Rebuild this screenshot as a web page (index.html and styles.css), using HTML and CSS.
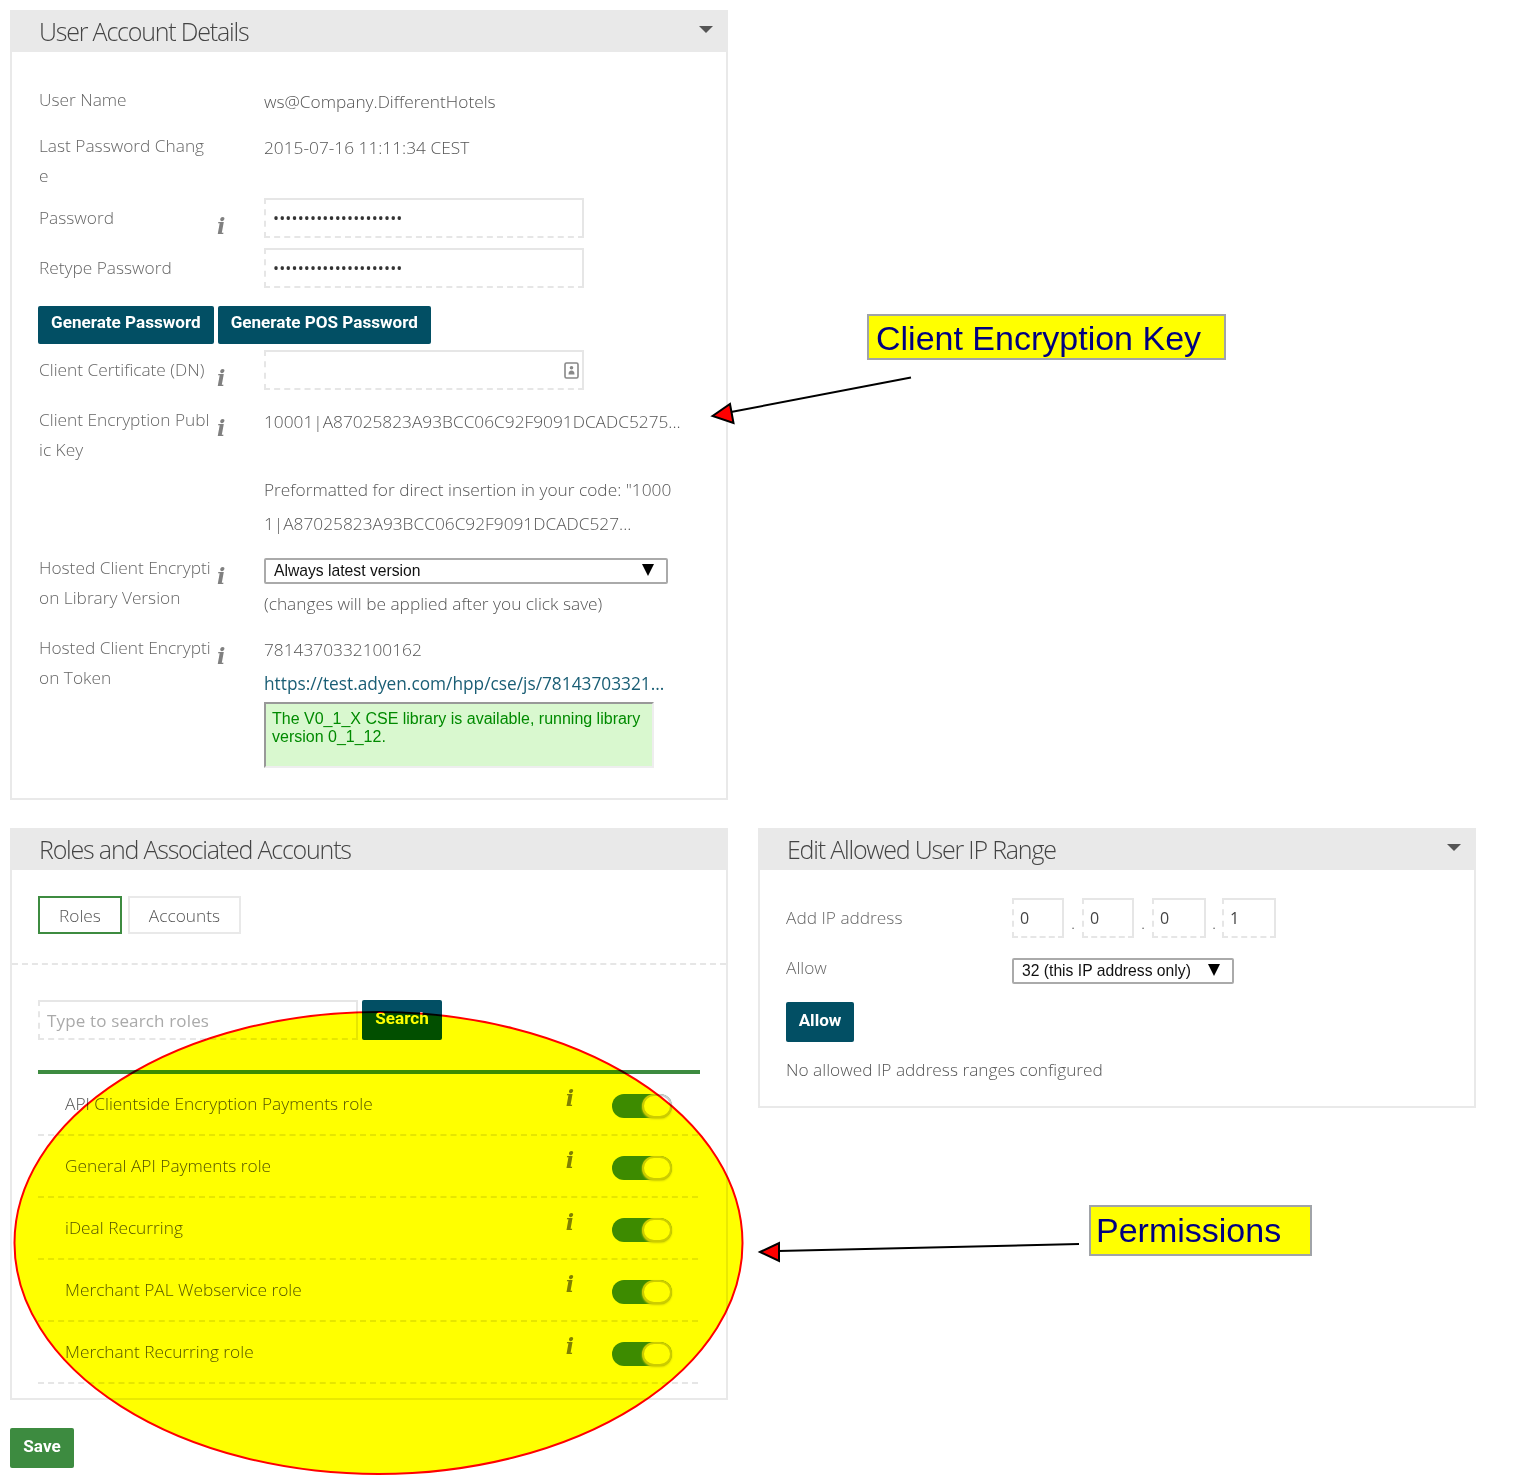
FILE: index.html

```html
<!DOCTYPE html>
<html lang="en">
<head>
  <meta charset="UTF-8" />
  <title>User Account Details</title>
  <link rel="stylesheet" href="styles.css">
</head>
<body>
  <div class="page">
    <div class="columns">
      <section class="panel">
        <div class="panel-head"><h2>User Account Details</h2><span class="caret"></span></div>
        <div class="panel-body details">
          <div class="row">
            <div class="label">User Name</div><div class="info"></div>
            <div class="value">ws@Company.DifferentHotels</div>
          </div>
          <div class="row row-tight">
            <div class="label">Last Password Change</div><div class="info"></div>
            <div class="value">2015-07-16 11:11:34 CEST</div>
          </div>
          <div class="row row-field">
            <div class="label">Password</div><div class="info"><i>i</i></div>
            <div class="value"><input class="text-input" type="password" value="passwordpassword12345"></div>
          </div>
          <div class="row row-field row-last">
            <div class="label">Retype Password</div><div class="info"></div>
            <div class="value"><input class="text-input" type="password" value="passwordpassword12345"></div>
          </div>
          <div class="btn-row">
            <button class="btn">Generate Password</button>
            <button class="btn">Generate POS Password</button>
          </div>
          <div class="row row-field row-cert">
            <div class="label">Client Certificate (DN)</div><div class="info"><i>i</i></div>
            <div class="value cert-wrap">
              <input class="text-input" type="text">
              <svg class="cert-icon" width="15" height="17" viewBox="0 0 15 17">
                <rect x="1" y="1" width="13" height="15" rx="1.5" fill="#fff" stroke="#888" stroke-width="1.6"/>
                <circle cx="7.5" cy="5.8" r="1.8" fill="#888"/>
                <path d="M4.5 12.5c0-3 1.2-4 3-4s3 1 3 4z" fill="#888"/>
              </svg>
            </div>
          </div>
          <div class="row">
            <div class="label">Client Encryption Public Key</div><div class="info"><i>i</i></div>
            <div class="value">
              <div class="one-line">10001|A87025823A93BCC06C92F9091DCADC5275...</div>
              <div class="blank"></div>
              <div class="break-text">Preformatted for direct insertion in your code: "10001|A87025823A93BCC06C92F9091DCADC527...</div>
            </div>
          </div>
          <div class="row">
            <div class="label">Hosted Client Encryption Library Version</div><div class="info"><i>i</i></div>
            <div class="value">
              <div class="select select-wide"><span>Always latest version</span><b class="arrow"></b></div>
              <div class="after-select">(changes will be applied after you click save)</div>
            </div>
          </div>
          <div class="row row-end">
            <div class="label">Hosted Client Encryption Token</div><div class="info"><i>i</i></div>
            <div class="value">
              <div>7814370332100162</div>
              <a class="link" href="#">https://test.adyen.com/hpp/cse/js/78143703321...</a>
              <div class="notice">The V0_1_X CSE library is available, running library version 0_1_12.</div>
            </div>
          </div>
        </div>
      </section>
      <div></div>

      <section class="panel panel-roles">
        <div class="panel-head"><h2>Roles and Associated Accounts</h2></div>
        <div class="tabs">
          <span class="tab tab-active">Roles</span>
          <span class="tab">Accounts</span>
        </div>
        <div class="role-area">
          <div class="search-row">
            <input class="text-input search-input" type="text" placeholder="Type to search roles">
            <button class="btn btn-search">Search</button>
          </div>
          <div class="role-list">
            <div class="role"><span class="role-name">API Clientside Encryption Payments role</span><i>i</i><span class="toggle"></span></div>
            <div class="role"><span class="role-name">General API Payments role</span><i>i</i><span class="toggle"></span></div>
            <div class="role"><span class="role-name">iDeal Recurring</span><i>i</i><span class="toggle"></span></div>
            <div class="role"><span class="role-name">Merchant PAL Webservice role</span><i>i</i><span class="toggle"></span></div>
            <div class="role"><span class="role-name">Merchant Recurring role</span><i>i</i><span class="toggle"></span></div>
          </div>
        </div>
      </section>

      <section class="panel panel-ip">
        <div class="panel-head"><h2>Edit Allowed User IP Range</h2><span class="caret"></span></div>
        <div class="panel-body ip-body">
          <div class="ip-row">
            <div class="ip-label">Add IP address</div>
            <div class="ip-fields">
              <input class="text-input octet" type="text" value="0"><span class="dot">.</span>
              <input class="text-input octet" type="text" value="0"><span class="dot">.</span>
              <input class="text-input octet octet-wide" type="text" value="0"><span class="dot dot-narrow">.</span>
              <input class="text-input octet octet-wide" type="text" value="1">
            </div>
          </div>
          <div class="ip-row ip-row-allow">
            <div class="ip-label">Allow</div>
            <div class="select select-ip"><span>32 (this IP address only)</span><b class="arrow"></b></div>
          </div>
          <button class="btn btn-allow">Allow</button>
          <p class="ip-note">No allowed IP address ranges configured</p>
        </div>
      </section>
    </div>
    <button class="btn btn-save">Save</button>
  </div>

  <!-- annotations drawn on top of the screenshot -->
  <div class="callout callout-key">Client Encryption Key</div>
  <div class="callout callout-perm">Permissions</div>
  <svg class="markup" width="1526" height="1476" viewBox="0 0 1526 1476">
    <ellipse class="blob" cx="378.5" cy="1243" rx="364" ry="231" fill="#ffff00" stroke="#ff0000" stroke-width="2"/>
    <path d="M911 377.500L731 412" stroke="#000" stroke-width="2" fill="none"/>
    <path d="M712.500 416L730 404L733.500 423z" fill="#f00" stroke="#000" stroke-width="2"/>
    <path d="M1079 1244L778 1251" stroke="#000" stroke-width="2" fill="none"/>
    <path d="M760 1252L779 1243L779 1261z" fill="#f00" stroke="#000" stroke-width="2"/>
  </svg>
</body>
</html>
```

FILE: styles.css

```css
* {
  box-sizing: border-box;
}

html, body {
  margin: 0;
  height: 1476px;
  overflow: hidden;
  background: #fff;
}

body {
  position: relative;
  font-family: "Open Sans", Arial, sans-serif;
  font-weight: 300;
  font-size: 17.3px;
  color: #555;
}

.page {
  padding: 10px;
}

.columns {
  display: grid;
  grid-template-columns: 718px 718px;
  column-gap: 30px;
  row-gap: 28px;
  align-items: start;
}

.panel {
  border: 2px solid #e9e9e9;
  background: #fff;
}

.panel-head {
  display: flex;
  justify-content: space-between;
  align-items: center;
  height: 42px;
  margin: -2px -2px 0;
  padding: 0 15px 0 29px;
  background: #e9e9e9;
}

.panel-head h2 {
  margin: 0;
  font-size: 25px;
  font-weight: 300;
  letter-spacing: -1.2px;
  color: #444;
  white-space: nowrap;
}

.caret {
  width: 0;
  height: 0;
  margin-top: -4px;
  border-left: 7px solid transparent;
  border-right: 7px solid transparent;
  border-top: 7px solid #555;
}

/* user details */
.details {
  padding: 33px 0 30px 26px;
}

.row {
  display: grid;
  grid-template-columns: 174px 52px 1fr;
  margin-bottom: 12px;
}

.row-tight {
  margin-bottom: 7px;
}

.row-field {
  margin-bottom: 10px;
}

.row-field .label {
  padding-top: 5px;
}

.row-field .info {
  padding-top: 5px;
}

.row-last {
  margin-bottom: 18px;
}

.row-cert {
  margin-bottom: 15px;
}

.row-end {
  margin-bottom: 0;
}

.label {
  padding-left: 1px;
  line-height: 30px;
  color: #666;
  word-break: break-all;
}

.info {
  padding-left: 5px;
}

i {
  font-family: "DejaVu Serif", serif;
  font-size: 22px;
  font-weight: 700;
  font-style: italic;
  color: #808080;
}

.info i {
  display: block;
  line-height: 22px;
  margin-top: 12px;
}

.value {
  width: 452px;
  line-height: 34px;
  color: #555;
}

.one-line {
  white-space: nowrap;
}

.blank {
  height: 34px;
}

.break-text {
  width: 410px;
  word-break: break-all;
}

.text-input {
  display: block;
  width: 320px;
  height: 40px;
  padding: 0 7px;
  border: 2px dashed #e6e6e6;
  border-top-style: solid;
  border-right-style: solid;
  background: #fff;
  color: #333;
  font-family: "Open Sans", Arial, sans-serif;
  font-size: 16px;
  letter-spacing: 0.15px;
  outline: none;
}

.text-input::placeholder {
  color: #aaa;
  font-weight: 400;
}

.search-input {
  font-size: 17px;
}

.cert-wrap {
  position: relative;
}

.cert-icon {
  position: absolute;
  left: 300px;
  top: 12px;
}

.btn {
  height: 40px;
  padding: 0 13px 5px;
  border: 0;
  border-radius: 2px;
  background: #024f64;
  color: #fff;
  font-family: Roboto, Arial, sans-serif;
  font-size: 17.100px;
  font-weight: 700;
  white-space: nowrap;
}

.btn-row {
  display: flex;
  gap: 4px;
  margin-bottom: 6px;
}

.btn-row .btn {
  height: 38px;
  padding-bottom: 6px;
}

.select {
  display: flex;
  justify-content: space-between;
  align-items: center;
  height: 26px;
  padding: 0 12px 0 8px;
  border: 2px solid #aaa;
  border-radius: 2px;
  background: #fff;
  color: #111;
  font-family: "Liberation Sans", Arial, sans-serif;
  font-size: 15.700px;
  font-weight: 400;
}

.select-wide {
  width: 404px;
  margin-top: 5px;
}

.arrow {
  width: 0;
  height: 0;
  margin-top: -2px;
  border-left: 6px solid transparent;
  border-right: 6px solid transparent;
  border-top: 12px solid #000;
}

.after-select {
  margin-top: 3px;
}

.link {
  display: block;
  color: #1a5e75;
  font-weight: 400;
  text-decoration: none;
  white-space: nowrap;
}

.notice {
  width: 390px;
  height: 66px;
  margin-top: 1px;
  padding: 6px 6px;
  border: 2px solid #999;
  border-right-color: #eee;
  border-bottom-color: #eee;
  background: #d9f8cf;
  color: #008a00;
  font-family: "Liberation Sans", Arial, sans-serif;
  font-size: 16px;
  font-weight: 400;
  line-height: 18px;
}

/* roles */
.panel-roles {
  height: 572px;
}

.tabs {
  display: flex;
  gap: 6px;
  height: 95px;
  padding: 26px 0 0 26px;
  border-bottom: 2px dashed #e6e6e6;
}

.tab {
  height: 38px;
  padding: 0 19px;
  border: 2px solid #e9e9e9;
  line-height: 35px;
  color: #555;
}

.tab-active {
  border-color: #3d8b40;
}

.role-area {
  padding: 35px 26px 0;
}

.search-row {
  display: flex;
  gap: 4px;
}

.btn-search {
  width: 80px;
  padding: 0 0 5px;
}

.role-list {
  width: 662px;
  margin-top: 30px;
  border-top: 4px solid #3d8b40;
}

.role {
  display: flex;
  align-items: center;
  width: 660px;
  height: 62px;
  padding: 0 26px 0 27px;
  border-bottom: 2px dashed #e6e6e6;
}

.role-name {
  flex: 1;
  margin-top: -1px;
  color: #555;
}

.role i {
  margin: -12px 38px 0 0;
}

.toggle {
  position: relative;
  width: 60px;
  height: 24px;
  margin-top: 4px;
  border-radius: 12px;
  background: #3d8b40;
}

.toggle::after {
  content: "";
  position: absolute;
  right: 0;
  top: 0;
  box-sizing: border-box;
  width: 30px;
  height: 24px;
  border-radius: 12px;
  border: 2px solid #ccc;
  background: #fff;
  box-shadow: 0 1px 2px #ccc;
}

/* ip range */
.panel-ip {
  height: 280px;
}

.ip-body {
  padding: 28px 0 0 26px;
}

.ip-row {
  display: flex;
  align-items: center;
}

.ip-label {
  width: 226px;
  margin-top: -2px;
  color: #666;
}

.ip-fields {
  display: flex;
}

.octet {
  width: 52px;
  padding: 0 6px;
  color: #444;
}

.octet-wide {
  width: 54px;
}

.dot {
  width: 18px;
  padding-top: 10px;
  text-align: center;
  line-height: 30px;
}

.dot-narrow {
  width: 16px;
}

.ip-row-allow {
  margin-top: 20px;
}

.ip-row-allow .ip-label {
  margin-top: -8px;
}

.select-ip {
  width: 222px;
}

.btn-allow {
  display: block;
  width: 68px;
  margin-top: 18px;
  padding: 0 0 5px;
}

.ip-note {
  margin: 16px 0 0;
  line-height: 24px;
  color: #555;
}

.btn-save {
  display: block;
  width: 64px;
  margin-top: 28px;
  padding: 0 0 5px;
  background: #3d8b40;
}

/* markup layer */
.markup {
  position: absolute;
  left: 0;
  top: 0;
}

.blob {
  mix-blend-mode: multiply;
}

.callout {
  position: absolute;
  padding-left: 7px;
  border: 2px solid #a0a3a8;
  background: #ff0;
  color: #000080;
  font-family: "Liberation Sans", Arial, sans-serif;
  font-size: 34px;
  font-weight: 400;
  white-space: nowrap;
}

.callout-key {
  left: 867px;
  top: 314px;
  width: 359px;
  height: 46px;
  line-height: 44px;
}

.callout-perm {
  left: 1089px;
  top: 1205px;
  width: 223px;
  height: 51px;
  padding-left: 5px;
  line-height: 47px;
}
```
